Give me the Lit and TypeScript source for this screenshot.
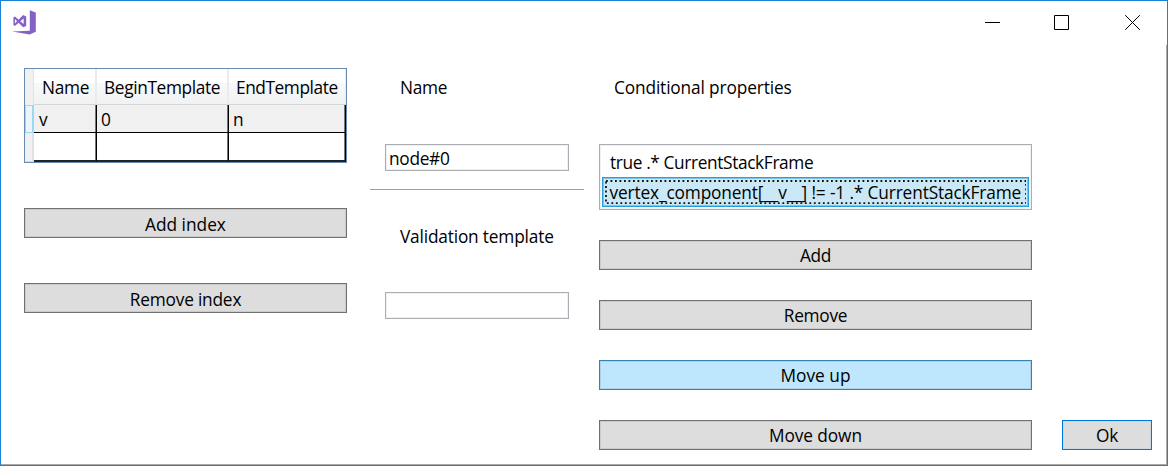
import { LitElement, html, css } from "lit";
import { customElement, property } from "lit/decorators.js";

@customElement("push-button")
class PushButton extends LitElement {
  @property() tone = "plain";
  static styles = css`
    :host { display: block; }
    .btn {
      display: flex; align-items: center; justify-content: center;
      box-sizing: border-box; width: 100%; height: 30px; margin: 0; padding: var(--drop, 2px) 0 0;
      border: 1px solid #707070; background: #ddd; color: #000;
      box-shadow: inset 0 0 0 1px #cbcbcb;
      font: inherit; letter-spacing: inherit; line-height: 24px; white-space: pre;
    }
    .hot { background: #bee6fd; border-color: #3c7fb1; box-shadow: inset 0 0 0 1px #a9d3ec; }
    .default { border-color: #0078d7; box-shadow: inset 0 0 0 1px #cfd8df; }
  `;
  render() {
    return html`<button class="btn ${this.tone}"><slot></slot></button>`;
  }
}

@customElement("index-grid")
class IndexGrid extends LitElement {
  static styles = css`
    :host { display: block; }
    .grid {
      display: grid; box-sizing: border-box; width: 323px; height: 95px;
      border: 1px solid #688caf; background: #fff;
      grid-template-columns: 9px 63px 132px 117px; grid-template-rows: 36px 28px 29px;
      line-height: 24px; white-space: pre;
    }
    .head {
      box-sizing: border-box; padding: 7px 0 0 8px; border-right: 2px solid #e9ebed;
      border-bottom: 1px solid #d5d5d5;
      background: linear-gradient(#fff 0, #fff 40%, #f7f8fa 41%, #f1f2f4 100%);
    }
    .head.last { border-right-width: 1px; }
    .corner { background: #f0f0f0; border-right: 1px solid #e2e2e2; box-sizing: border-box; }
    .handle { box-sizing: border-box; background: #f0f0f0; border-right: 2px solid #dfe1e4; border-bottom: 1px solid #ddd; }
    .handle.active { border: 1px solid #98d9f8; border-right-width: 2px; background: #ecf4f9; }
    .cell { box-sizing: border-box; padding: 3px 0 0 4px; border-right: 1px solid #000; border-bottom: 1px solid #000; box-shadow: inset -1px 0 #777; }
    .filled { background: #f0f0f0; }
    .tail { border-bottom: 2px solid #202428; }
    .begin { padding-left: 7px; letter-spacing: -0.33px; }
    .begin { letter-spacing: -0.36px; }
    .end { padding-left: 7px; letter-spacing: -0.43px; }
    .first { padding-left: 5px; }
  `;
  render() {
    return html`<div class="grid">
      <div class="corner"></div><div class="head">Name</div><div class="head begin">BeginTemplate</div><div class="head last end">EndTemplate</div>
      <div class="handle active"></div><div class="cell filled first">v</div><div class="cell filled">0</div><div class="cell filled">n</div>
      <div class="handle"></div><div class="cell tail"></div><div class="cell tail"></div><div class="cell tail"></div>
    </div>`;
  }
}

@customElement("app-root")
class AppRoot extends LitElement {
  static styles = css`
    :host {
      display: block; box-sizing: border-box; width: 1168px; height: 466px; overflow: hidden;
      border: 1px solid #1883d7; background: #fff; color: #000;
      font: 17.3px "Open Sans", "Noto Sans", sans-serif; letter-spacing: -0.3px;
    }
    .bar { display: flex; height: 44px; box-sizing: border-box; padding: 9px 0 0 11px; }
    .logo { flex: none; }
    .controls { flex: none; margin: 0 27px 0 auto; width: 156px; height: 26px; }
    .body {
      display: flex; box-sizing: border-box; height: 420px; padding: 23px 14px 0 23px;
      border-right: 1px solid #aaa; border-bottom: 1px solid #aaa;
    }
    .indices { width: 323px; }
    .indices push-button { margin-top: 45px; --drop: 4px; }
    .wide { letter-spacing: 0; }
    .mid { letter-spacing: -0.2px; }
    .down { letter-spacing: -0.1px; }
    .fields { width: 214px; margin-left: 23px; }
    .label { line-height: 24px; padding: 8px 0 0 30px; white-space: pre; }
    .box {
      box-sizing: border-box; width: 184px; height: 27px; margin: 44px 0 0 15px; padding: 2px 0 0 3px;
      border: 1px solid #abadb3; box-shadow: inset 0 0 0 1px #f0f0f4; line-height: 24px;
    }
    .rule { height: 1px; margin-top: 18px; background: #a0a0a0; }
    .validation { padding-top: 35px; letter-spacing: -0.18px; }
    .box.empty { margin-top: 43px; }
    .props { width: 433px; margin-left: 15px; }
    .props .label { padding-left: 15px; letter-spacing: -0.14px; }
    .list {
      box-sizing: border-box; height: 66px; margin-top: 44px; padding: 2px;
      border: 1px solid #abadb3; box-shadow: inset 0 0 0 1px #f0f0f4; line-height: 24px;
    }
    .item { box-sizing: border-box; height: 30px; padding: 4px 0 0 8px; white-space: pre; letter-spacing: -0.37px; }
    .item.selected { display: flex; padding: 2px; border: 1px solid #26a0da; background: #cbe8f6; box-shadow: inset 0 0 0 1px #7cc5e8; letter-spacing: -0.14px; }
    .focus { flex: 1; display: flex; position: relative; padding: 1px 0 0 4.5px; line-height: 24px; height: 23px; }
    .dots { position: absolute; inset: 0; width: 100%; height: 100%; }
    .props push-button { margin-top: 30px; }
    .ok { width: 90px; margin: auto 0 14px auto; }
  `;
  render() {
    return html`
      <div class="bar">
        <svg class="logo" width="26" height="26" viewBox="1.6 0 26 26">
          <path fill="#8661c5" d="M19.4 0.2 25.4 2.4V21.8L19.4 24.4 1.6 21.4 19.4 20.8Z"/>
          <path fill="#8661c5" fill-rule="evenodd" d="M3 7.2 4.5 6.5 8.2 9.7 12.7 5.1 15.8 6.4V16L12.7 17.3 8.2 12.8 4.5 15.9 3 15.1ZM4.5 9.1V13.4L6.6 11.3ZM10 11.3 13.2 14V8.5Z"/>
        </svg>
        <svg class="controls" width="156" height="26" viewBox="0 0 156 26" fill="none" stroke="#000">
          <path d="M1 12.5H16"/>
          <path d="M70.5 5.5H84.5V19.5H70.5Z"/>
          <path d="M141.2 5.2 155.8 19.8M155.8 5.2 141.2 19.8"/>
        </svg>
      </div>
      <div class="body">
        <div class="indices">
          <index-grid></index-grid>
          <push-button class="wide">Add index</push-button>
          <push-button class="mid">Remove index</push-button>
        </div>
        <div class="fields">
          <div class="label">Name</div>
          <div class="box">node#0</div>
          <div class="rule"></div>
          <div class="label validation">Validation template</div>
          <div class="box empty"></div>
        </div>
        <div class="props">
          <div class="label">Conditional properties</div>
          <div class="list"><div class="item">true .* CurrentStackFrame</div><div class="item selected"><div class="focus"><svg class="dots"><rect x="1" y="1" width="420" height="22.2" fill="none" stroke="#111" stroke-width="1.8" stroke-dasharray="1.8 2.7"/></svg><span>vertex_component[__v__] != -1 .* CurrentStackFrame</span></div></div></div>
          <push-button>Add</push-button>
          <push-button>Remove</push-button>
          <push-button class="wide" tone="hot">Move up</push-button>
          <push-button class="down">Move down</push-button>
        </div>
        <push-button class="ok" tone="default">Ok</push-button>
      </div>`;
  }
}
